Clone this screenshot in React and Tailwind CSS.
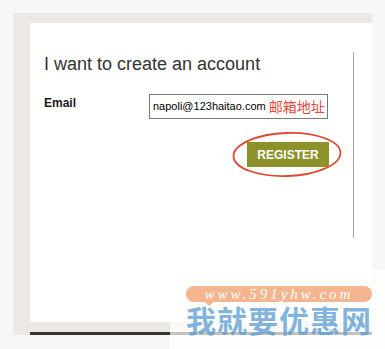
import React from "react";

export default function App() {
  return (
    <div className="relative w-[385px] h-[349px] bg-[#f7f7f6] pt-[13px] pl-[13px] overflow-hidden" style={{ fontFamily: '"Liberation Sans", Arial, sans-serif' }}>
      <div className="w-[359px] h-[322px] bg-[#ece9e4] pt-[10px] pl-[17px] flex flex-col">
        <div className="w-[342px] h-[300px] bg-white pt-[29px]">
          <div className="w-[324px] h-[186px] border-r border-[#a9a6a3] pl-[14px] pt-[2px]">
            <h1 className="text-[18px] leading-[20px] text-[#333230] font-normal">I want to create an account</h1>
            <div className="mt-[20px] flex items-start">
              <div className="w-[105px] text-[12px] leading-[16px] font-bold text-[#1a1a1a] pt-[1px]">Email</div>
              <div className="w-[179px] h-[25px] border border-[#7c7875] flex items-center pl-[3px] whitespace-nowrap">
                <span className="text-[11px] text-black">napoli@123haitao.com</span>
                <span className="ml-[3px] text-[14px] text-[#e5493c]" style={{ fontFamily: '"Noto Sans CJK SC", sans-serif' }}>邮箱地址</span>
              </div>
            </div>
            <div className="mt-[23px] w-[285px] flex justify-end">
              <div className="relative">
                <button className="w-[82px] h-[25px] bg-[#8d9129] text-white text-[12px] font-bold flex items-center justify-center">REGISTER</button>
                <svg className="absolute left-[-16px] top-[-11px]" width="112" height="47" viewBox="0 0 112 47">
                  <ellipse cx="56" cy="23.5" rx="53.5" ry="21.5" fill="none" stroke="#dd4a2f" strokeWidth="1.8" transform="rotate(-2 56 23.5)" />
                </svg>
              </div>
            </div>
          </div>
        </div>
        <div className="h-[10px]" />
        <div className="w-[342px] h-[3px] bg-[#3a332e]" />
      </div>

      <div className="absolute left-[170px] top-[270px] w-[215px] h-[79px] bg-white/70" />
      <div className="absolute left-[186px] top-[286px] w-[186px] h-[16px] rounded-full bg-[#f3b690] flex items-center justify-center">
        <span className="text-white italic text-[15px] leading-[16px] tracking-[3px]" style={{ fontFamily: '"Liberation Serif", serif' }}>www.591yhw.com</span>
      </div>
      <div className="absolute left-[203px] top-[301px] w-0 h-0 border-l-[6px] border-r-[6px] border-t-[5px] border-l-transparent border-r-transparent border-t-[#f3b690]" />
      <div className="absolute left-[186px] top-[303px] text-[30px] leading-[32px] font-bold text-[#5a9bd3]/75 whitespace-nowrap tracking-[1px]" style={{ fontFamily: '"Noto Sans CJK SC", sans-serif' }}>我就要优惠网</div>
    </div>
  );
}
